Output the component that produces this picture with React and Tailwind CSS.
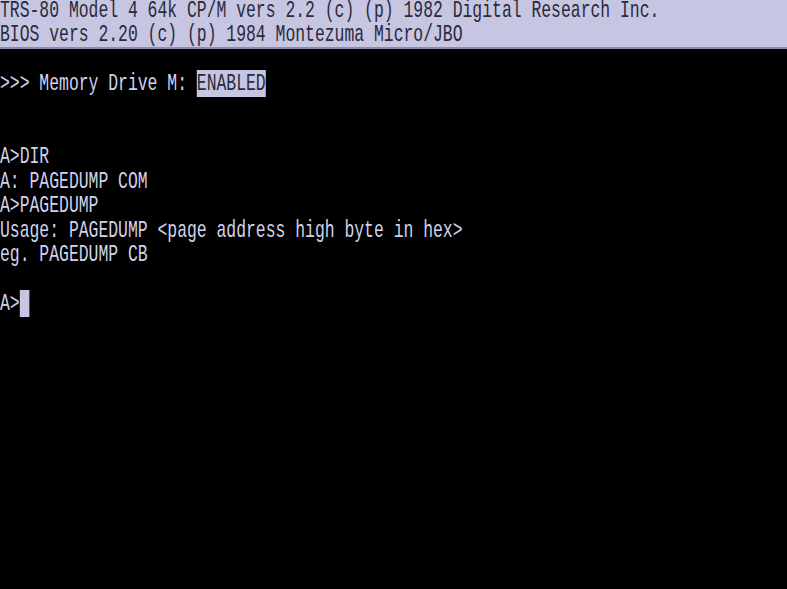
import React from "react";

const Line = ({ children, className = "-translate-y-[2px]" }) => (
  <div
    className={
      "h-[24.54px] leading-[24.54px] whitespace-pre origin-top-left scale-x-[0.6833] " +
      className
    }
  >
    {children}
  </div>
);

export default function App() {
  return (
    <div
      className="w-[787px] h-[589px] bg-black overflow-hidden text-[24px] text-[#d2d2ec]"
      style={{ fontFamily: '"Liberation Mono", monospace' }}
    >
      <div className="bg-[#c6c6e2] text-[#2a2a3c] border-b-2 border-[#8c8ca6] h-[49px] overflow-hidden">
        <Line className="-translate-y-[1px]">TRS-80 Model 4 64k CP/M vers 2.2 (c) (p) 1982 Digital Research Inc.</Line>
        <Line>BIOS vers 2.20 (c) (p) 1984 Montezuma Micro/JBO</Line>
      </div>
      <Line> </Line>
      <Line>
        {">>> Memory Drive M: "}
        <span className="bg-[#c6c6e2] text-[#2a2a3c]">ENABLED</span>
      </Line>
      <Line> </Line>
      <Line> </Line>
      <Line>A&gt;DIR</Line>
      <Line>A: PAGEDUMP COM</Line>
      <Line>A&gt;PAGEDUMP</Line>
      <Line>Usage: PAGEDUMP &lt;page address high byte in hex&gt;</Line>
      <Line>eg. PAGEDUMP CB</Line>
      <Line> </Line>
      <Line>
        A&gt;<span className="bg-[#c6c6e2]">{" "}</span>
      </Line>
    </div>
  );
}
